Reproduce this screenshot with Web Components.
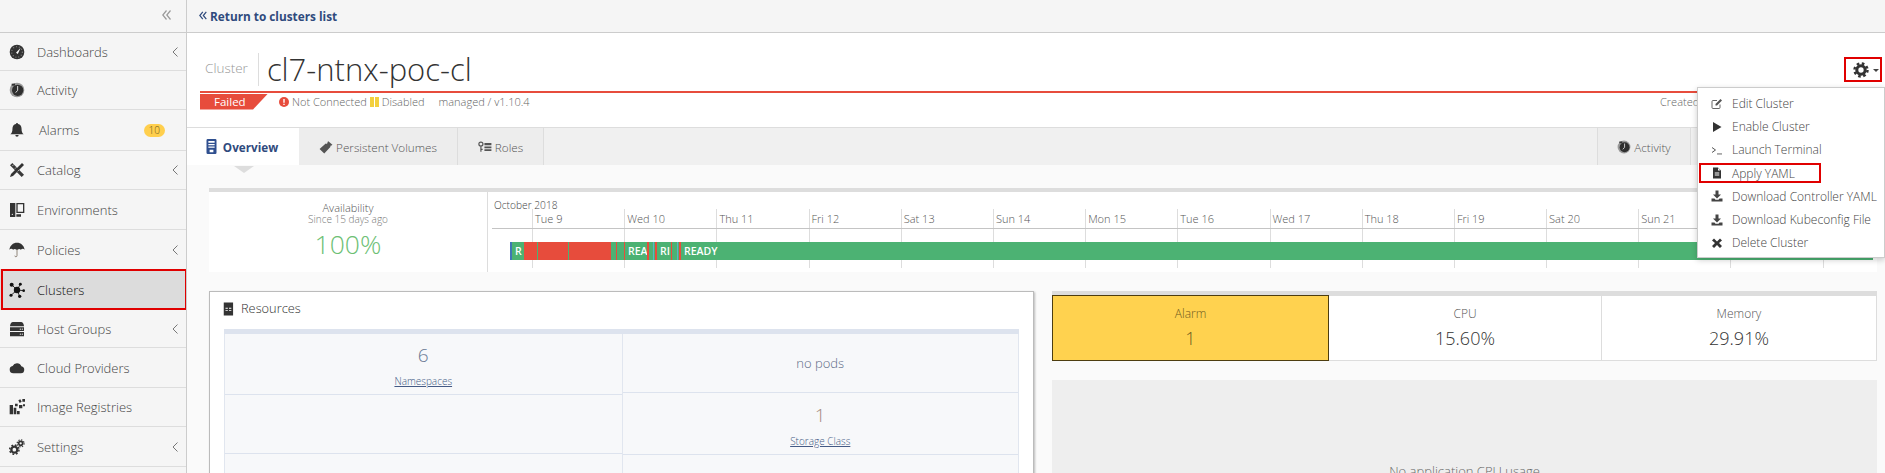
<!DOCTYPE html>
<html>
<head>
<meta charset="utf-8">
<title>Cluster</title>
<style>
  html, body { margin: 0; height: 473px; overflow: hidden; background: #fafafa; }
  body { font-family: "Open Sans", "Liberation Sans", sans-serif; font-size: 13px; color: #555; }
</style>
</head>
<body>
<app-shell>
  <side-nav slot="nav"></side-nav>
  <top-bar></top-bar>
  <cluster-header></cluster-header>
  <tab-bar></tab-bar>
  <avail-timeline></avail-timeline>
  <div style="display:grid;grid-template-columns:825px 825px;column-gap:18px;padding:19px 0 0 22px">
    <resources-panel></resources-panel>
    <stats-column></stats-column>
  </div>
  <action-menu></action-menu>
</app-shell>

<script>
const ICONS = {
  gauge: '<circle cx="12" cy="12" r="11" fill="#333"/><circle cx="12" cy="12" r="8" fill="none" stroke="#888" stroke-width="1.6" stroke-dasharray="1.4 3"/><path d="M10.500 13l7-7.500-4.300 9.500z" fill="#fff"/>',
  clock: '<circle cx="12" cy="12" r="11" fill="#999"/><circle cx="13" cy="12.500" r="8.500" fill="#2f2f2f"/><path d="M13 6v6.500l-3 3.500" fill="none" stroke="#ddd" stroke-width="1.500"/><path d="M4 2.500h5v3H4z" fill="#333"/>',
  bell: '<path d="M12 1.500a1.600 1.600 0 0 1 1.600 1.600c3.400.7 5.200 3.400 5.200 6.600 0 5 1.200 6.900 3.200 8.800H2c2-1.900 3.200-3.800 3.200-8.800 0-3.200 1.800-5.900 5.200-6.600A1.600 1.600 0 0 1 12 1.500zM9.500 19.500h5a2.500 2.500 0 0 1-5 0z" fill="#333"/>',
  tools: '<path d="M1.500 5L5 1.500 22.500 19 19 22.500z" fill="#3a3a3a"/><path d="M19.500 1.500l3 3L6 21l-4.500 1.500L3 18z" fill="#333"/><path d="M7 4l-2 2M11 8l-2 2M15 12l-2 2" stroke="#f5f5f5" stroke-width="1"/>',
  env: '<path d="M1.500 1.500h8v21h-8zM11 1.500h12v15H11zM13 3.500v11h8v-11zM11 18.500h7v3.500h-7z" fill="#333" fill-rule="evenodd"/><circle cx="5" cy="18.500" r="1" fill="#f5f5f5"/>',
  umbrella: '<path d="M12 1c6 0 10.500 4 11.500 10.500-1.700-1.800-4-1.800-5.700 0-1.400-1.500-3.500-1.500-4.800 0h-2c-1.300-1.500-3.400-1.500-4.800 0-1.700-1.800-4-1.800-5.700 0C1.500 5 6 1 12 1z" fill="#333"/><path d="M12 11v9.500c0 2.200-3.300 2.200-3.300 0" fill="none" stroke="#776a5c" stroke-width="1.200"/>',
  nodes: '<g fill="#111"><circle cx="12" cy="12" r="4.800"/><circle cx="4" cy="4" r="3"/><circle cx="17" cy="3.500" r="2.200"/><circle cx="22" cy="13" r="2"/><circle cx="16" cy="21.500" r="2.500"/><circle cx="3" cy="20" r="2.300"/></g><path d="M4 4l8 8 5-8.500M12 12l10 1M12 12l4 9.500M12 12L3 20" stroke="#111" stroke-width="1.300" fill="none"/>',
  hosts: '<path d="M6 1.500h12c2.500 0 4.500 3 4.500 6.500h-21C1.500 4.500 3.500 1.500 6 1.500zM1.500 9.500h21V15h-21zM1.500 16.500h21V23h-21z" fill="#333"/><g fill="#f5f5f5"><circle cx="20" cy="12.200" r=".9"/><circle cx="20" cy="19.700" r=".9"/><circle cx="17" cy="12.200" r=".9"/><circle cx="17" cy="19.700" r=".9"/></g>',
  cloud: '<path d="M6.500 20a5.500 5.500 0 0 1-1-10.900A7 7 0 0 1 18.500 9.500 5.300 5.300 0 0 1 18 20z" fill="#333"/>',
  registry: '<path d="M1 9h5v14H1zM7 13h4v10H7zM12 18h4v5h-4z" fill="#333"/><path d="M9 7h4v4H9zM14 2l3-1.500 2 3.500-3 2zM20 0h4v4h-4zM15 9h5v5h-5zM21 8h3v3h-3z" fill="#333"/>',
  gears: '<circle cx="8" cy="16" r="4.500" fill="none" stroke="#333" stroke-width="3.500"/><circle cx="8" cy="16" r="7" fill="none" stroke="#333" stroke-width="2.200" stroke-dasharray="2.700 2.800"/><circle cx="17.500" cy="6.500" r="3" fill="none" stroke="#333" stroke-width="2.600"/><circle cx="17.500" cy="6.500" r="5.200" fill="none" stroke="#333" stroke-width="1.800" stroke-dasharray="2 2.080"/>',
  gear: '<circle cx="12" cy="12" r="6.300" fill="none" stroke="#333" stroke-width="4.600"/><circle cx="12" cy="12" r="9.800" fill="none" stroke="#333" stroke-width="3.600" stroke-dasharray="3.900 3.800"/>',
  phone: '<path d="M6 0h12a2 2 0 0 1 2 2v20a2 2 0 0 1-2 2H6a2 2 0 0 1-2-2V2a2 2 0 0 1 2-2zM7 3v3h10V3zM7 8v2h10V8zM7 12v2h10v-2zM9 17v4h6v-4z" fill="#2f4f8f" fill-rule="evenodd"/>',
  tag: '<path d="M16 2l7 6-1.500 1.500a2 2 0 0 0 -2 2.500L9 23 1 15.500 11.500 6a2 2 0 0 0 3-2.500z" fill="#555"/>',
  roles: '<g fill="#555"><circle cx="5" cy="7" r="3.500" fill="none" stroke="#555" stroke-width="2"/><path d="M4 11h2v9H4zM6 15h2v2H6z"/><path d="M11 5h12v4H11zM11 11h12v3H11zM11 16h12v3H11z"/></g>',
  edit: '<path d="M18 13v6a2 2 0 0 1-2 2H4a2 2 0 0 1-2-2V7a2 2 0 0 1 2-2h8" fill="none" stroke="#555" stroke-width="1.800"/><path d="M9 12L19 2l3 3L12 15H9z" fill="#555"/>',
  play: '<path d="M4 2l17 10L4 22z" fill="#333"/>',
  term: '<path d="M2 7l7 5-7 5" fill="none" stroke="#555" stroke-width="2"/><path d="M12 19h10v1.800H12z" fill="#555"/>',
  file: '<path d="M4 1h10l6 6v16H4zM14 2v5h5zM7.500 11v2h9v-2zM7.500 15v2h9v-2z" fill="#333" fill-rule="evenodd"/>',
  download: '<path d="M9 1h6v8h5l-8 8-8-8h5z" fill="#444"/><path d="M1 17h6l2 2.500h6L17 17h6v6H1z" fill="#444"/>',
  cross: '<path d="M6 3l6 6 6-6 4 4-6 5 6 6-4 4-6-6-6 6-4-4 6-6-6-5z" fill="#333"/>',
  list: '<path d="M3 1h16v22H3zM6 10v1.500h4V10zM12 10v1.500h4V10zM6 14v1.500h4V14zM12 14v1.500h4V14z" fill="#333" fill-rule="evenodd"/>'
};

function icon(name, size) {
  return `<svg width="${size}" height="${size}" viewBox="0 0 24 24" style="display:block;flex:none">${ICONS[name]}</svg>`;
}

class AppShell extends HTMLElement {
  constructor() {
    super();
    this.attachShadow({ mode: 'open' });
    this.shadowRoot.innerHTML = `
      <style>
        :host { display: grid; grid-template-columns: 187px 1fr; height: 473px; overflow: hidden; position: relative; }
        .nav { border-right: 1px solid #ccc; background: #f5f5f5; overflow: hidden; }
        .main { min-width: 0; overflow: hidden; }
      </style>
      <div class="nav"><slot name="nav"></slot></div>
      <div class="main"><slot></slot></div>
    `;
  }
}

class NavItem extends HTMLElement {
  constructor() {
    super();
    this.attachShadow({ mode: 'open' });
  }

  connectedCallback() {
    const badge = this.getAttribute('badge');
    const hasChevron = this.hasAttribute('chevron');
    this.shadowRoot.innerHTML = `
      <style>
        :host { display: block; box-sizing: border-box; position: relative; border-bottom: 1px solid #ddd; font-weight: 300; color: #444; }
        :host([active]) { background: #dcdcdc; color: #111; }
        :host([active]) .mark { position: absolute; inset: -1px -1px -1px 1px; border: 2px solid #e00000; }
        .row { display: flex; align-items: center; height: 100%; padding-left: 9px; box-sizing: border-box; }
        .ic { width: 16px; margin-right: 12px; }
        .label { flex: 1; }
        .badge { background: #ffcf4d; border-radius: 7px; font-size: 10px; line-height: 13px; padding: 0 5px; margin-right: 21px; color: #6a5a20; }
        .chev { margin-right: 8px; }
        :host([offset]) .label { margin-left: 2px; }
      </style>
      <div class="row">
        <span class="ic">${icon(this.getAttribute('icon'), 16)}</span>
        <span class="label">${this.getAttribute('label')}</span>
        ${badge ? `<span class="badge">${badge}</span>` : ''}
        ${hasChevron ? '<svg class="chev" width="6" height="10" viewBox="0 0 6 10"><path d="M5.500 .5L1 5l4.500 4.500" fill="none" stroke="#777"/></svg>' : ''}
      </div>
      <span class="mark"></span>
    `;
    this.style.height = this.getAttribute('h') + 'px';
  }
}

class SideNav extends HTMLElement {
  constructor() {
    super();
    this.attachShadow({ mode: 'open' });
    const items = [
      ['Dashboards', 'gauge', 38, true],
      ['Activity', 'clock', 39],
      ['Alarms', 'bell', 41, false, '10'],
      ['Catalog', 'tools', 39, true],
      ['Environments', 'env', 40],
      ['Policies', 'umbrella', 40, true],
      ['Clusters', 'nodes', 40, false, '', true],
      ['Host Groups', 'hosts', 38, true],
      ['Cloud Providers', 'cloud', 40],
      ['Image Registries', 'registry', 39],
      ['Settings', 'gears', 40, true]
    ];
    this.shadowRoot.innerHTML = `
      <style>
        :host { display: block; }
        .top { height: 32px; border-bottom: 1px solid #ccc; display: flex; justify-content: flex-end; align-items: center; padding-right: 15px; }
        .top svg { display: block; margin-top: -2px; }
      </style>
      <div class="top"><svg width="9" height="10" viewBox="0 0 9 10"><path d="M4.500 .5L.8 5l3.700 4.500M8.500 .5L4.800 5l3.700 4.500" fill="none" stroke="#999" stroke-width="1.200"/></svg></div>
      ${items.map(([label, ic, h, chev, badge, active]) => `
        <nav-item label="${label}" icon="${ic}" h="${h}" ${chev ? 'chevron' : ''} ${badge ? `badge="${badge}"` : ''} ${active ? 'active' : ''} ${label === 'Alarms' ? 'offset' : ''}></nav-item>
      `).join('')}
    `;
  }
}

class TopBar extends HTMLElement {
  constructor() {
    super();
    this.attachShadow({ mode: 'open' });
    this.shadowRoot.innerHTML = `
      <style>
        :host { display: flex; align-items: center; height: 32px; background: #f5f5f5; border-bottom: 1px solid #ccc; padding-left: 12px; }
        a { color: #2f4a7d; font-weight: 700; font-size: 11.800px; text-decoration: none; display: flex; align-items: center; gap: 3px; margin-top: -1px; }
      </style>
      <a href="#"><svg width="8" height="9" viewBox="0 0 8 9"><path d="M3.800 .8L.8 4.500l3 3.700M7.300 .8L4.300 4.500l3 3.700" fill="none" stroke="#2f4a7d" stroke-width="1.200"/></svg>Return to clusters list</a>
    `;
  }
}

class ClusterHeader extends HTMLElement {
  constructor() {
    super();
    this.attachShadow({ mode: 'open' });
    this.shadowRoot.innerHTML = `
      <style>
        :host { display: block; height: 94px; background: #fff; box-sizing: border-box; position: relative; padding: 19px 0 0 13px; }
        .head { display: flex; align-items: center; height: 39px; }
        .kind { color: #999; font-size: 13.500px; font-weight: 300; padding: 0 10px 0 5px; border-right: 1px solid #ddd; height: 33px; line-height: 31px; margin-top: -4px; }
        h1 { margin: -4px 0 0 8px; font-size: 31px; font-weight: 300; color: #333; line-height: 39px; }
        .gear { position: absolute; right: 3px; top: 24px; width: 38px; height: 25px; box-sizing: border-box; border: 2px solid #e00000; display: flex; align-items: center; gap: 4px; padding-left: 7px; }
        .caret { width: 0; height: 0; border: 3px solid transparent; border-top-color: #444; border-bottom: 0; margin-top: 2px; }
        .line { height: 2px; background: #e74c3c; margin-right: 185px; }
        .status { display: flex; align-items: center; height: 17px; position: relative; font-size: 11px; color: #666; font-weight: 300; }
        .failed { width: 68px; height: 16px; background: #e74c3c; color: #fff; font-size: 11.500px; font-weight: 400; line-height: 15px; box-sizing: border-box; padding-left: 14px; clip-path: polygon(0 0, 100% 0, 78% 100%, 0 100%); }
        .err { margin-left: 11px; margin-right: 3px; }
        .pause { display: inline-flex; gap: 1px; margin: 0 3px; }
        .pause i { width: 4px; height: 10px; background: #f3d03e; display: block; }
        .managed { margin-left: 14px; }
        .created { position: absolute; left: 1460px; top: 0; line-height: 17px; }
      </style>
      <div class="head"><span class="kind">Cluster</span><h1>cl7-ntnx-poc-cl</h1></div>
      <div class="gear">${icon('gear', 16)}<span class="caret"></span></div>
      <div class="line"></div>
      <div class="status">
        <span class="failed">Failed</span>
        <svg class="err" width="10" height="10" viewBox="0 0 10 10"><circle cx="5" cy="5" r="5" fill="#e74c3c"/><path d="M4.300 2h1.400v3.800H4.300zM4.300 6.700h1.400V8H4.300z" fill="#fff"/></svg>
        <span>Not Connected</span>
        <span class="pause"><i></i><i></i></span>
        <span>Disabled</span>
        <span class="managed">managed / v1.10.4</span>
        <span class="created">Created</span>
      </div>
    `;
  }
}

class TabBar extends HTMLElement {
  constructor() {
    super();
    this.attachShadow({ mode: 'open' });
    const tab = (label, ic, width, active) => `
      <div class="tab ${active ? 'on' : ''}" style="width:${width}px">${icon(ic, active ? 15 : 14)}<span>${label}</span></div>`;
    this.shadowRoot.innerHTML = `
      <style>
        :host { display: block; position: relative; height: 38px; box-sizing: border-box; background: #f0f0f0; border-top: 1px solid #ddd; }
        .tabs { display: flex; height: 37px; }
        .tab { display: flex; align-items: center; justify-content: center; gap: 3px; box-sizing: border-box; border-right: 1px solid #ddd; background: #ededed; color: #555; font-size: 11.700px; font-weight: 300; height: 37px; }
        .tab.on { background: #fff; color: #2f4a7d; font-weight: 700; border-right: 0; gap: 4px; padding-right: 4px; }
        .spacer { flex: 1; }
        .tab.act { border-left: 1px solid #ddd; }
        .arrow { position: absolute; left: 47px; top: 38px; width: 0; height: 0; border: 10px solid transparent; border-top: 7px solid #ddd; border-bottom: 0; }
      </style>
      <div class="tabs">
        ${tab('Overview', 'phone', 112, true)}
        ${tab('Persistent Volumes', 'tag', 159)}
        ${tab('Roles', 'roles', 86)}
        <div class="spacer"></div>
        ${tab('Activity', 'clock', 94).replace('class="tab ', 'class="tab act ')}
        <div style="width:194px"></div>
      </div>
      <div class="arrow"></div>
    `;
  }
}

class AvailTimeline extends HTMLElement {
  constructor() {
    super();
    this.attachShadow({ mode: 'open' });
    // the last two day columns sit under the open menu, so they have no label
    const days = ['Tue 9', 'Wed 10', 'Thu 11', 'Fri 12', 'Sat 13', 'Sun 14', 'Mon 15', 'Tue 16', 'Wed 17', 'Thu 18', 'Fri 19', 'Sat 20', 'Sun 21', '', ''];
    const G = '#4cb273', R = '#e74c3c';
    // width in px, colour, text
    const segs = [
      [2, '#3f75b5'], [12, G, 'R'], [13, R], [1, G], [30, R], [1, G], [42, R], [5, G], [1, R], [7, G], [1, R],
      [22, G, 'REA'], [2, R], [4, G], [1, '#58b5c9'], [1, G], [2, R], [14, G, 'RI'], [1, R], [5, G], [1, '#58b5c9'], [1, G], [2, R], [G]
    ];
    this.shadowRoot.innerHTML = `
      <style>
        :host { display: block; margin: 23px 8px 0 22px; height: 84px; box-sizing: border-box; border-top: 4px solid #ddd; background: #fff; position: relative; }
        .wrap { display: grid; grid-template-columns: 278px 1fr; height: 80px; }
        .avail { text-align: center; color: #555; padding-top: 10px; font-size: 11px; line-height: 12px; font-weight: 300; }
        .avail small { display: block; font-size: 10px; color: #777; margin-top: -1px; }
        .avail b { display: block; font-weight: 300; font-size: 26.500px; line-height: 34px; color: #6dbf75; margin-top: 2px; }
        .chart { border-left: 1px solid #ddd; position: relative; overflow: hidden; }
        .month { font-size: 10.200px; font-weight: 300; line-height: 12px; padding: 7px 0 0 6px; height: 17px; box-sizing: border-box; color: #444; }
        .days { display: flex; padding-left: 44px; height: 59px; position: relative; }
        .days::after { content: ''; position: absolute; left: 4px; right: 0; top: 19px; height: 1px; background: #c4c4c4; }
        .day { flex: none; width: 92.200px; box-sizing: border-box; border-left: 1px solid #ddd; padding: 4px 0 0 2px; font-size: 11px; line-height: 12px; color: #555; font-weight: 300; }
        .bar { position: absolute; left: 22px; width: 1363px; top: 50px; height: 18px; display: flex; color: #fff; font-size: 10.500px; line-height: 18px; font-weight: 600; }
        .bar span { display: block; overflow: hidden; white-space: nowrap; box-sizing: border-box; }
        .bar .t { padding-left: 3px; }
      </style>
      <div class="wrap">
        <div class="avail">Availability<small>Since 15 days ago</small><b>100%</b></div>
        <div class="chart">
          <div class="month">October 2018</div>
          <div class="days">${days.map((d) => `<div class="day">${d}</div>`).join('')}</div>
          <div class="bar">
            ${segs.map((s) => s.length === 1
              ? `<span class="t" style="flex:1;background:${s[0]}">READY</span>`
              : `<span class="${s[2] ? 't' : ''}" style="width:${s[0]}px;background:${s[1]}">${s[2] || ''}</span>`).join('')}
          </div>
        </div>
      </div>
    `;
  }
}

class ResourcesPanel extends HTMLElement {
  constructor() {
    super();
    this.attachShadow({ mode: 'open' });
    this.shadowRoot.innerHTML = `
      <style>
        :host { display: block; background: #fff; border: 1px solid #bbb; box-shadow: 1px 1px 2px #bbb; box-sizing: border-box; height: 300px; padding: 0 14px; }
        .title { display: flex; align-items: center; gap: 5px; height: 37px; font-size: 12.800px; color: #333; margin-left: -2px; font-weight: 300; }
        .title span { margin-top: -5px; }
        .title svg { margin-top: -4px; }
        .grid { border-top: 5px solid #dde3ee; display: grid; grid-template-columns: 1fr 1fr; background: #f7f8fa; height: 200px; }
        .col { border-left: 1px solid #e1e6ef; }
        .col:last-child { border-right: 1px solid #e1e6ef; }
        .cell { box-sizing: border-box; border-bottom: 1px solid #dde3ee; text-align: center; }
        .num { font-size: 19px; font-weight: 300; line-height: 26px; padding-top: 8px; color: #6a7a94; }
        .num.warm { color: #a58c80; padding-top: 9px; }
        a { font-size: 10px; color: #445a85; text-decoration: underline; font-weight: 300; display: block; line-height: 14px; margin-top: 6px; }
        .np { line-height: 59px; font-size: 13px; color: #5a6a85; font-weight: 300; }
      </style>
      <div class="title">${icon('list', 14)}<span>Resources</span></div>
      <div class="grid">
        <div class="col">
          <div class="cell" style="height:61px"><div class="num">6</div><a href="#">Namespaces</a></div>
          <div class="cell" style="height:59px"></div>
        </div>
        <div class="col">
          <div class="cell np" style="height:59px">no pods</div>
          <div class="cell" style="height:62px"><div class="num warm">1</div><a href="#">Storage Class</a></div>
        </div>
      </div>
    `;
  }
}

class StatsColumn extends HTMLElement {
  constructor() {
    super();
    this.attachShadow({ mode: 'open' });
    this.shadowRoot.innerHTML = `
      <style>
        :host { display: block; }
        .tiles { display: grid; grid-template-columns: 277px 273px 275px; border-top: 5px solid #ddd; height: 70px; box-sizing: border-box; background: #fff; border-bottom: 1px solid #ddd; }
        .tile { text-align: center; border-right: 1px solid #ddd; color: #555; box-sizing: border-box; font-size: 12px; padding-top: 10px; line-height: 16px; font-weight: 300; }
        .tile b { display: block; font-weight: 300; font-size: 18px; line-height: 24px; margin-top: 4px; color: #333; }
        .tile.alarm { background: #ffd24f; border: 1px solid #4d3d10; margin: -1px 0 -1px 0; color: #6f5a20; }
        .tile.alarm b { color: #6f5a20; }
        .empty { margin-top: 19px; background: #eee; height: 120px; text-align: center; line-height: 182px; font-size: 13px; color: #666; font-weight: 300; }
      </style>
      <div class="tiles">
        <div class="tile alarm">Alarm<b>1</b></div>
        <div class="tile">CPU<b>15.60%</b></div>
        <div class="tile">Memory<b>29.91%</b></div>
      </div>
      <div class="empty">No application CPU usage</div>
    `;
  }
}

class ActionMenu extends HTMLElement {
  constructor() {
    super();
    this.attachShadow({ mode: 'open' });
    const items = [
      ['Edit Cluster', 'edit'], ['Enable Cluster', 'play'], ['Launch Terminal', 'term'],
      ['Apply YAML', 'file', true], ['Download Controller YAML', 'download'],
      ['Download Kubeconfig File', 'download'], ['Delete Cluster', 'cross']
    ];
    this.shadowRoot.innerHTML = `
      <style>
        :host { position: absolute; left: 1697px; top: 87px; width: 188px; height: 171px; box-sizing: border-box; background: #fff; border: 1px solid #ccc; box-shadow: 0 2px 6px rgba(0,0,0,.2); padding-top: 4px; }
        .item { position: relative; display: flex; align-items: center; height: 23.200px; padding-left: 13px; font-size: 12px; color: #444; font-weight: 300; }
        .item svg { margin-right: 9px; }
        .mark { position: absolute; left: 1px; top: 1px; width: 122px; height: 20px; box-sizing: border-box; border: 2px solid #e00000; }
      </style>
      ${items.map(([label, ic, mark]) => `
        <div class="item">${icon(ic, 12)}<span>${label}</span>${mark ? '<span class="mark"></span>' : ''}</div>
      `).join('')}
    `;
  }
}

customElements.define('app-shell', AppShell);
customElements.define('nav-item', NavItem);
customElements.define('side-nav', SideNav);
customElements.define('top-bar', TopBar);
customElements.define('cluster-header', ClusterHeader);
customElements.define('tab-bar', TabBar);
customElements.define('avail-timeline', AvailTimeline);
customElements.define('resources-panel', ResourcesPanel);
customElements.define('stats-column', StatsColumn);
customElements.define('action-menu', ActionMenu);
</script>
</body>
</html>
